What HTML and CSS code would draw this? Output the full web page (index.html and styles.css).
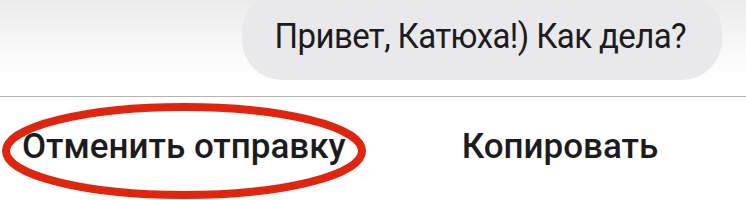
FILE: index.html
```html
<!DOCTYPE html>
<html lang="ru">
<head>
    <meta charset="utf-8">
    <title>Сообщение</title>
    <link rel="stylesheet" href="styles.css">
</head>
<body>
    <div class="chat">
        <div class="bubble"><span class="bubble-text">Привет, Катюха!) Как дела?</span></div>
    </div>
    <div class="divider"></div>
    <div class="actions">
        <div class="action action-marked">
            Отменить отправку
            <svg class="mark" viewBox="0 0 370 100" width="370" height="100">
                <ellipse cx="184" cy="50" rx="178" ry="44" fill="none" stroke="#e0250f" stroke-width="8"/>
            </svg>
        </div>
        <div class="action">Копировать</div>
    </div>
</body>
</html>
```
FILE: styles.css
```css
body {
    margin: 0;
    width: 746px;
    height: 200px;
    overflow: hidden;
    background-color: white;
    font-family: Roboto, "Noto Sans", sans-serif;
    color: #1c1c1e;
}

.chat {
    display: flex;
    justify-content: flex-end;
    height: 96px;
    background: linear-gradient(to bottom, #ebebeb 0px, #f6f6f6 40px, #ffffff 80px);
}

.bubble {
    margin-top: -8px;
    margin-right: 24px;
    height: 88px;
    padding: 0 36px 2px 33px;
    box-sizing: border-box;
    display: flex;
    align-items: center;
    background-color: #e9e9eb;
    border-radius: 40px;
    font-size: 33px;
    letter-spacing: -0.6px;
}

.bubble-text {
    display: inline-block;
    transform: scaleY(1.08);
}

.divider {
    height: 1px;
    background-color: #b3b3b3;
}

.actions {
    display: flex;
    align-items: center;
    height: 103px;
}

.action {
    font-size: 35px;
    font-weight: 500;
    padding-bottom: 4px;
}

.action-marked {
    position: relative;
    margin-left: 22px;
    margin-right: 116px;
}

.mark {
    position: absolute;
    left: -22px;
    top: -25px;
}
```
